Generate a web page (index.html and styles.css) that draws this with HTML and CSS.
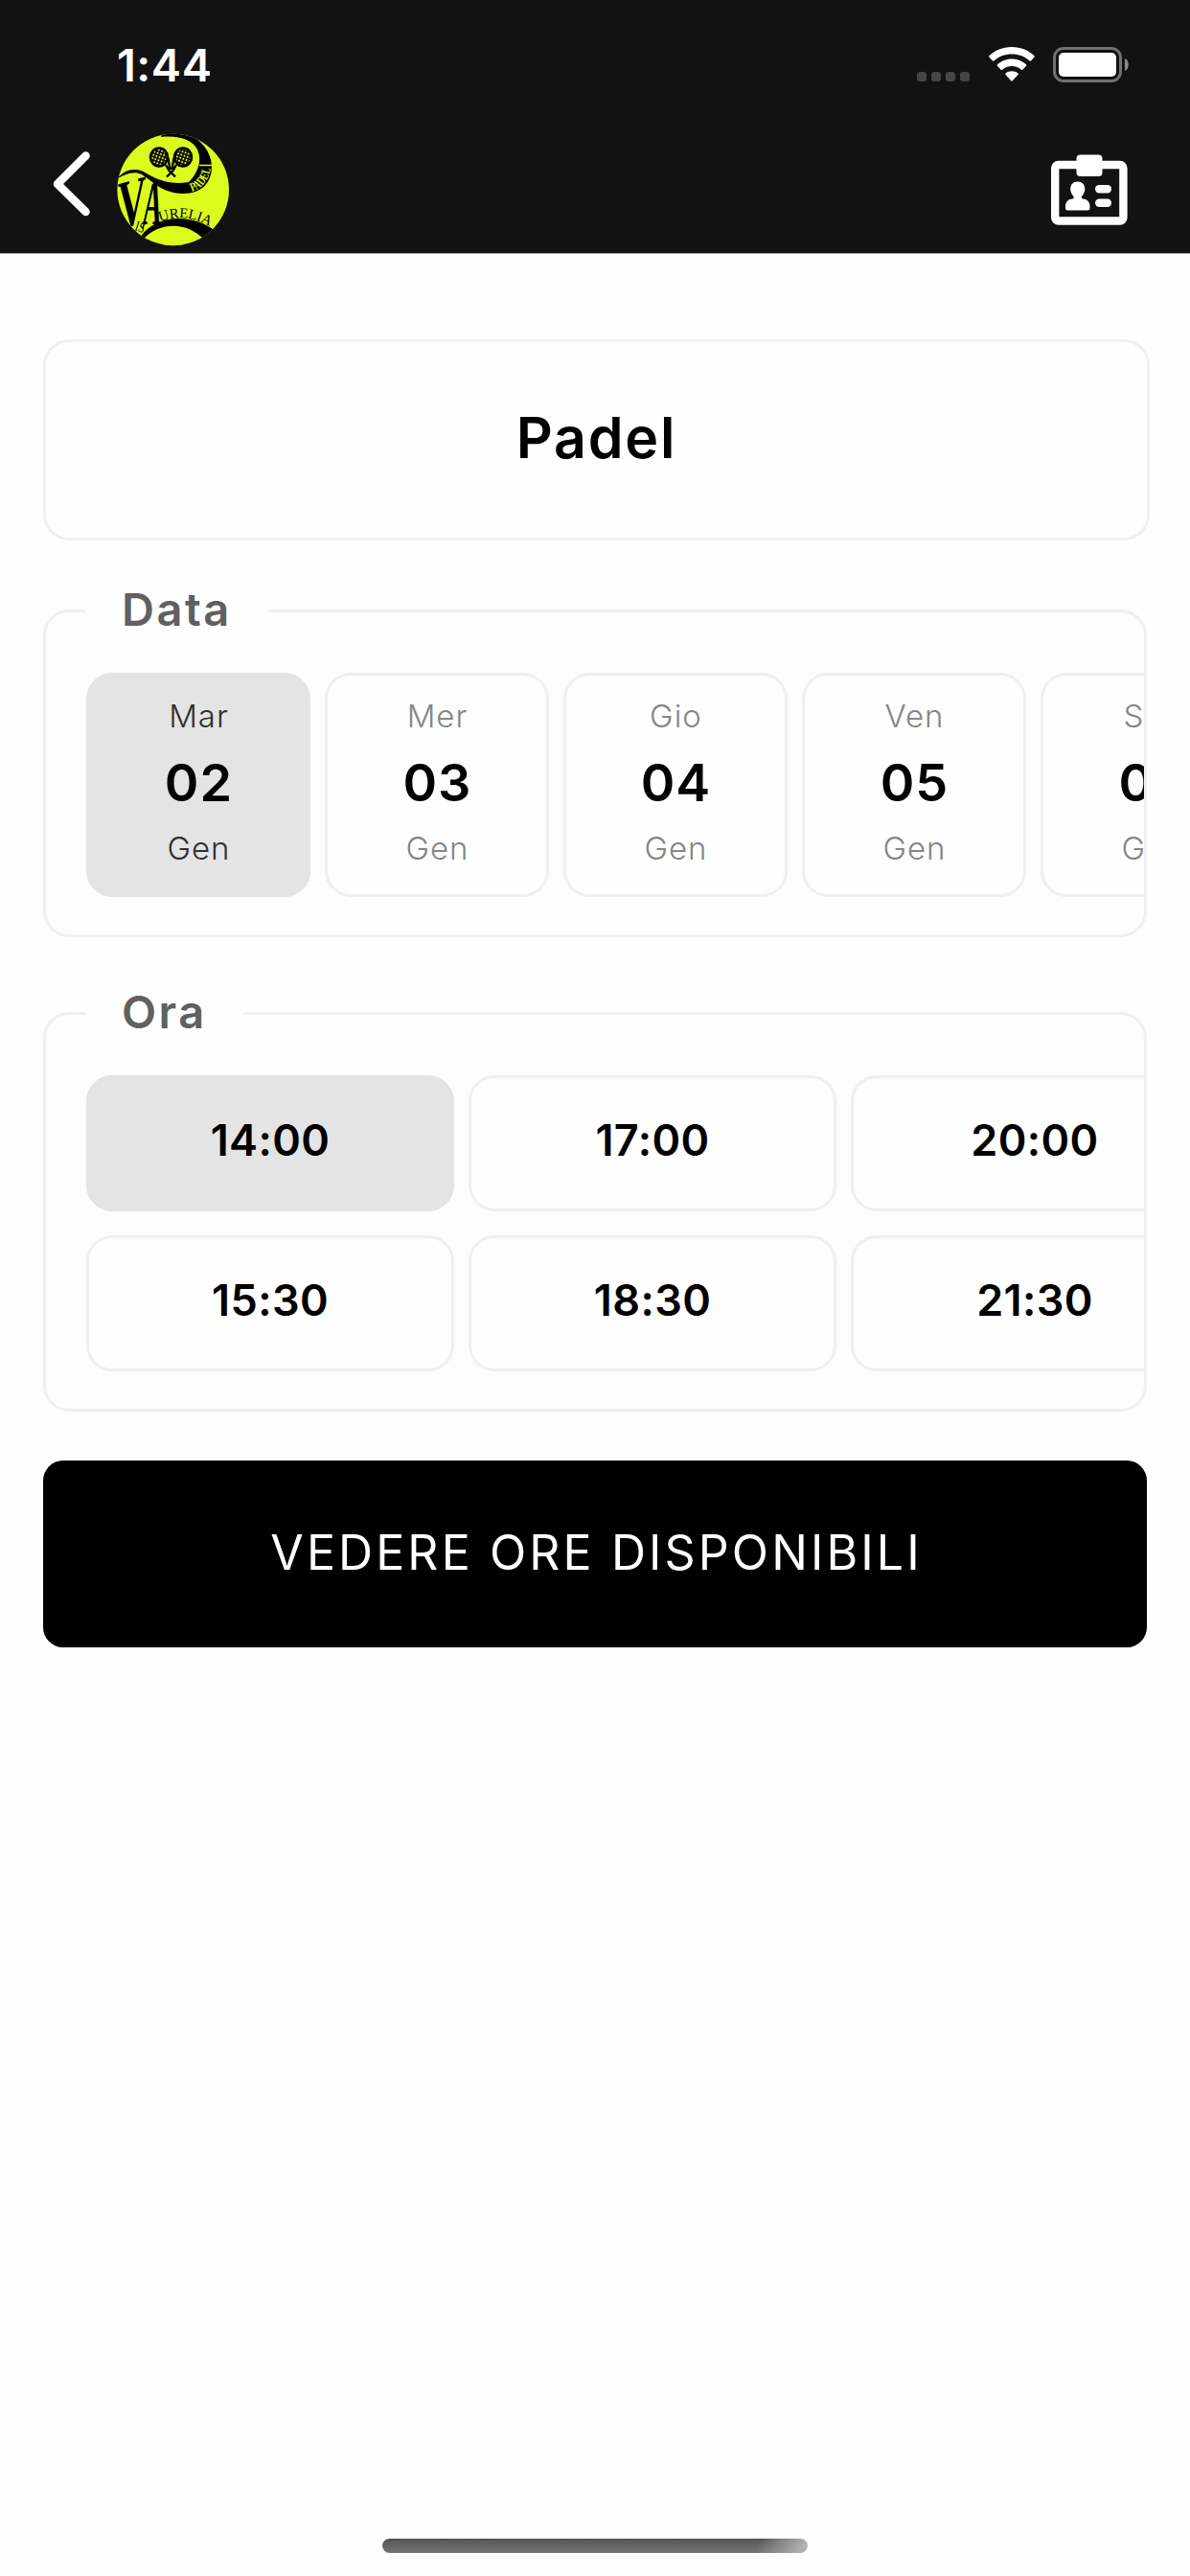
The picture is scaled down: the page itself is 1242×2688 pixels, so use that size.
FILE: index.html
```html
<!DOCTYPE html>
<html lang="it">
<head>
    <meta charset="UTF-8">
    <title>Prenota Padel</title>
    <link rel="stylesheet" href="styles.css">
</head>
<body>
    <header>
        <div class="status">
            <span class="ora-sistema">1:44</span>
            <div class="status-icone">
                <div class="segnale"><i></i><i></i><i></i><i></i></div>
                <svg class="wifi" viewBox="0 0 48 36" width="48" height="36" fill="#fff">
                    <path d="M24 0C14.500 0 6.300 3.600 0.400 9.300Q-0.100 10 0.400 10.600L4 14.400Q4.700 15 5.400 14.400C10.300 9.900 16.600 7.400 24 7.400S37.700 9.900 42.600 14.400Q43.300 15 44 14.400L47.600 10.600Q48.100 10 47.600 9.300C41.700 3.600 33.500 0 24 0Z"/>
                    <path d="M24 12.600C18 12.600 12.800 14.900 8.900 18.500Q8.300 19.200 8.900 19.800L12.700 23.700Q13.400 24.300 14.100 23.700C16.800 21.400 20.200 20.100 24 20.100S31.200 21.400 33.900 23.700Q34.600 24.300 35.300 23.700L39.100 19.800Q39.700 19.200 39.100 18.500C35.200 14.900 30 12.600 24 12.600Z"/>
                    <path d="M24 25.200C21.400 25.200 19.200 26.100 17.500 27.500Q16.900 28.200 17.500 28.900L23.300 35.300Q24 36 24.700 35.300L30.500 28.900Q31.100 28.200 30.500 27.500C28.800 26.100 26.600 25.200 24 25.200Z"/>
                </svg>
                <svg class="batteria" viewBox="0 0 80 37" width="80" height="37">
                    <rect x="1.500" y="1.500" width="69" height="34" rx="9.500" fill="none" stroke="#717171" stroke-width="3"/>
                    <rect x="6" y="6" width="60" height="25" rx="5" fill="#fff"/>
                    <path d="M75 12C80 14 80 23 75 25Z" fill="#8a8a8a"/>
                </svg>
            </div>
        </div>
        <nav>
            <svg class="indietro" viewBox="0 0 40 68" width="40" height="68" fill="none" stroke="#fff" stroke-width="8.500" stroke-linecap="round" stroke-linejoin="round">
                <path d="M34.500 4.500L5 34L34.500 63"/>
            </svg>
            <svg class="logo" viewBox="0 0 120 120" width="120" height="120">
                <defs>
                    <clipPath id="palla"><circle cx="60.700" cy="60" r="58.300"/></clipPath>
                    <pattern id="rete" width="3.400" height="3.400" patternUnits="userSpaceOnUse" patternTransform="rotate(20)">
                        <rect width="3.400" height="3.400" fill="#000"/>
                        <circle cx="1.700" cy="1.700" r="1.050" fill="#dafb1b"/>
                    </pattern>
                    <path id="arco-aurelia" d="M47 93.500Q75 82 106 102"/>
                    <path id="arco-padel" d="M80 62Q99 56 101 31"/>
                </defs>
                <g clip-path="url(#palla)">
                    <rect width="120" height="120" fill="#dafb1b"/>
                    <!-- onda superiore -->
                    <path d="M2 49C11 37 24 37 33 43C47 51 60 55 77 52C87 42 91 29 86 18C81 8 67 3 48 5L50 0H72C88 5 101 20 101 36C101 51 92 64 71 64C50 64 39 51 28 44C19 40 10 44 2 49Z"/>
                    <path d="M88 34.500H102" stroke="#dafb1b" stroke-width="1.300"/>
                    <text class="logo-padel" fill="#dafb1b"><textPath href="#arco-padel" textLength="33" lengthAdjust="spacingAndGlyphs">PADEL</textPath></text>
                    <!-- racchette -->
                    <g stroke="#000" fill="url(#rete)">
                        <ellipse cx="46" cy="26" rx="9" ry="9.500" stroke-width="2.600"/>
                        <ellipse cx="71" cy="26" rx="9" ry="9.500" stroke-width="2.600"/>
                        <path d="M53 34L56.500 40L63 46.500M64 34L60.500 40L54 46.500M55.500 27L57.500 39M61.500 27L59.500 39" fill="none" stroke-width="2.400"/>
                    </g>
                    <!-- scritta -->
                    <text class="logo-grande" transform="matrix(.62 -.17 0 1.080 3 101)">V</text>
                    <text class="logo-grande" transform="matrix(.4 0 -.1 1 28 96)">A</text>
                    <path d="M39.500 54L29 101" stroke="#000" stroke-width="1.300"/>
                    <text class="logo-is" transform="translate(20 102) rotate(18) scale(.75 1)">IS</text>
                    <text class="logo-piccolo"><textPath href="#arco-aurelia" textLength="54">URELIA</textPath></text>
                    <path d="M26 110C42 85 82 84 106 104L94 113C76 93 47 93 30 111Z"/>
                </g>
            </svg>
            <svg class="tessera" viewBox="0 0 80 74" width="80" height="74" fill="#fff">
                <rect x="4.200" y="11" width="71.200" height="58.500" rx="3.500" fill="none" stroke="#fff" stroke-width="8.400"/>
                <rect x="26.500" y="0.500" width="27" height="22.500" rx="4"/>
                <path d="M27.700 28.500c-4.700 0-7.500 3.400-7.500 7.600c0 4 2 6.200 3.400 8.200q.6 1.700-1.200 2.100c-4.300 0-7.400 3.300-7.400 7.600v2q0 2.500 2.500 2.500h20.500q2.500 0 2.500-2.500v-2c0-4.300-3.100-7.600-7.400-7.600q-1.800-.4-1.200-2.100c1.400-2 3.400-4.200 3.400-8.200c0-4.200-2.900-7.600-7.600-7.600z"/>
                <rect x="46" y="32" width="17" height="8.500" rx="4.200"/>
                <rect x="46" y="46.500" width="17" height="8.500" rx="4.200"/>
            </svg>
        </nav>
    </header>

    <main>
        <h1 class="sport">Padel</h1>

        <section class="riquadro data">
            <h2>Data</h2>
            <div class="giorni">
                <div class="giorno attivo"><span>Mar</span><b>02</b><span>Gen</span></div>
                <div class="giorno"><span>Mer</span><b>03</b><span>Gen</span></div>
                <div class="giorno"><span>Gio</span><b>04</b><span>Gen</span></div>
                <div class="giorno"><span>Ven</span><b>05</b><span>Gen</span></div>
                <div class="giorno"><span>Sab</span><b>06</b><span>Gen</span></div>
            </div>
        </section>

        <section class="riquadro ora">
            <h2>Ora</h2>
            <div class="orari">
                <div class="orario attivo">14:00</div>
                <div class="orario">17:00</div>
                <div class="orario">20:00</div>
                <div class="orario">15:30</div>
                <div class="orario">18:30</div>
                <div class="orario">21:30</div>
            </div>
        </section>

        <button class="btn">VEDERE ORE DISPONIBILI</button>
    </main>

    <div class="home"></div>
</body>
</html>
```

FILE: styles.css
```css
* { box-sizing: border-box; }
body { display: flex; flex-direction: column; height: 2688px; margin: 0; background: #fefefe; color: #000; font-family: Inter, "Liberation Sans", sans-serif; overflow: hidden; }
svg { display: block; flex: none; }

header { height: 265px; background: #121212; border-bottom: 1px solid #a5a5a5; color: #fff; }
.status { display: flex; justify-content: space-between; height: 134px; padding: 0 63px 0 122px; }
.ora-sistema { font-size: 47px; font-weight: 600; line-height: 136px; letter-spacing: 0.5px; }
.status-icone { display: flex; align-items: flex-start; padding-top: 49px; }
.segnale { display: flex; gap: 5px; padding-top: 26px; margin-right: 20px; }
.segnale i { width: 10px; height: 10px; border-radius: 3px; background: #454545; }
.wifi { margin: 0 19px 0 0; }
nav { display: flex; align-items: flex-start; padding: 4px 65px 0 55px; }
.indietro { margin-top: 20px; }
.logo { margin-left: 25px; }
.tessera { margin: 23px 0 0 auto; }
.logo-padel { font: bold 13px "Liberation Serif", serif; }
.logo-grande { font: bold 66px "Liberation Serif", serif; }
.logo-is { font: 15px "Liberation Serif", serif; }
.logo-piccolo { font: 15px "Liberation Serif", serif; }

main { display: flex; flex-direction: column; padding: 89px 45px 0; }
.sport { display: flex; align-items: center; justify-content: center; width: 1155px; height: 210px; margin: 0 0 72px; padding-bottom: 6px; border: 3px solid #f0f0f0; border-radius: 27px; font-size: 59px; font-weight: 600; letter-spacing: 1.8px; }

.riquadro { position: relative; border: 3px solid #f0f0f0; border-radius: 27px; background: #fdfdfd; }
.riquadro h2 { position: absolute; top: -45px; left: 42px; margin: 0; padding: 0 0 0 37px; background: #fefefe; color: #606060; font-size: 47px; font-weight: 600; line-height: 84px; letter-spacing: 2.5px; }
.data { height: 342px; margin-bottom: 78px; }
.data h2 { width: 189px; }
.ora { height: 417px; margin-bottom: 51px; }
.ora h2 { width: 163px; }

.giorni { display: flex; gap: 15px; padding: 63px 0 0 42px; overflow: hidden; }
.giorno { display: grid; grid-template-rows: repeat(3, 69px); flex: none; width: 234px; height: 234px; padding: 8px 0 0 1px; border: 3px solid #f0f0f0; border-radius: 27px; background: #fefefe; text-align: center; line-height: 69px; }
.giorno span { color: #858585; font-size: 33px; font-weight: 300; letter-spacing: 1px; }
.giorno b { font-size: 54px; font-weight: 600; letter-spacing: 1px; }

.orari { display: grid; grid-template-columns: repeat(3, 384px); gap: 25px 15px; padding: 63px 0 0 42px; overflow: hidden; }
.orario { height: 142px; border: 3px solid #f0f0f0; border-radius: 27px; background: #fefefe; font-size: 45px; font-weight: 600; line-height: 130px; letter-spacing: 0.4px; text-align: center; }

.giorno.attivo, .orario.attivo { background: #e4e4e4; border-color: #e4e4e4; }
.giorno.attivo span { color: #303030; }

.btn { height: 195px; padding: 0 0 4px 3px; border: none; border-radius: 21px; background: #000; color: #fff; font: 400 50px Inter, "Liberation Sans", sans-serif; letter-spacing: 3.1px; cursor: pointer; }
.home { width: 444px; height: 15px; margin: auto auto 24px; border-radius: 8px; background: linear-gradient(100deg, transparent 88%, #b8b8b8 100%), linear-gradient(#525252, #777); }
```
